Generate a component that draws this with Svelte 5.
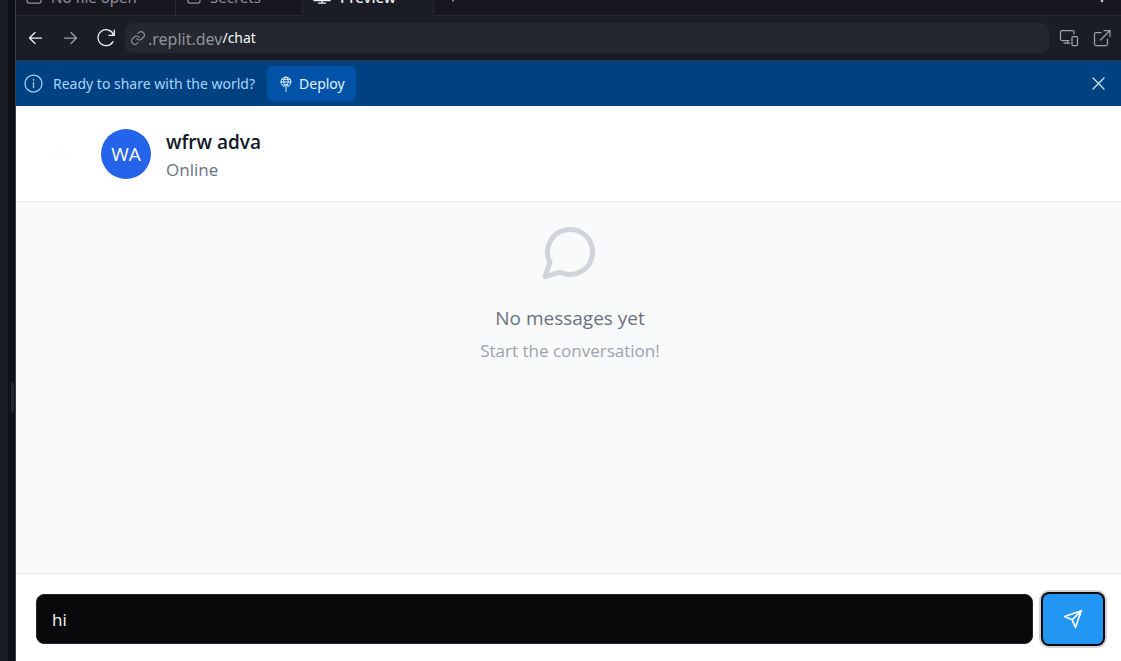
<script>
  let message = $state('hi');
  let address = $state('/chat');
  let bannerOpen = $state(true);
</script>

<div class="workspace">
  <div class="rail"></div>
  <div class="gutter"><span class="handle"></span></div>

  <div class="pane">
    <nav class="tabs">
      <button class="tab file">
        <svg width="16" height="14" viewBox="0 0 16 14"><rect x="1" y="1" width="14" height="12" rx="2" /></svg>
        No file open
      </button>
      <button class="tab secrets">
        <svg width="14" height="14" viewBox="0 0 14 14"><rect x="1" y="1" width="12" height="12" rx="2" /></svg>
        Secrets
      </button>
      <button class="tab preview">
        <svg width="18" height="14" viewBox="0 0 18 14"><path d="M1 1h16v9.500H1zM9 10.500V13M5.500 13h7M1 9.800h16" /></svg>
        Preview
      </button>
      <button class="tab add" aria-label="New tab">
        <svg width="12" height="12" viewBox="0 0 12 12"><path d="M6 0v10M0 5h12" /></svg>
      </button>
      <button class="tab more" aria-label="More options">
        <svg width="4" height="14" viewBox="0 0 4 14"><g fill="currentColor" stroke="none"><circle cx="2" cy="1" r="1.300" /><circle cx="2" cy="6" r="1.300" /><circle cx="2" cy="11" r="1.300" /></g></svg>
      </button>
    </nav>

    <div class="toolbar">
      <button class="tool bright" aria-label="Back">
        <svg width="15" height="14" viewBox="0 0 15 14"><path d="M13.500 7H1.500M7 1.500L1.500 7l5.500 5.500" /></svg>
      </button>
      <button class="tool" aria-label="Forward">
        <svg width="15" height="14" viewBox="0 0 15 14"><path d="M1.500 7h12M8 1.500L13.500 7 8 12.500" /></svg>
      </button>
      <button class="tool bright" aria-label="Reload">
        <svg width="20" height="18" viewBox="0 0 20 18"><path d="M17.600 6.200A8 8 0 1 0 17 12.600M18.300 1v5.400h-5.400" /></svg>
      </button>
      <div class="address">
        <svg width="16" height="16" viewBox="0 0 24 24"><path stroke-width="1.700" d="M10 13a5 5 0 0 0 7.500.5l3-3a5 5 0 0 0-7-7L11.800 5.200M14 11a5 5 0 0 0-7.500-.5l-3 3a5 5 0 0 0 7 7l1.700-1.700" /></svg>
        <label for="path">.replit.dev</label>
        <input id="path" type="text" bind:value={address} />
      </div>
      <button class="tool" aria-label="Device size">
        <svg width="20" height="18" viewBox="0 0 20 18"><path d="M10 11.500H3A1.500 1.500 0 0 1 1.500 10V3A1.500 1.500 0 0 1 3 1.500h10.500A1.500 1.500 0 0 1 15 3v2M8.500 11.500V14M5 14h6" /><rect x="13" y="7.500" width="5.500" height="9" rx="1" /></svg>
      </button>
      <button class="tool" aria-label="Open in new tab">
        <svg width="18" height="18" viewBox="0 0 18 18"><path d="M8 3.500H3A1.500 1.500 0 0 0 1.500 5v10A1.500 1.500 0 0 0 3 16.500h10a1.500 1.500 0 0 0 1.500-1.500v-5M11 1.500h6v6M17 1.500l-9.500 9.500" /></svg>
      </button>
    </div>

    {#if bannerOpen}
      <div class="banner">
        <svg width="19" height="19" viewBox="0 0 19 19"><circle cx="9.500" cy="9.500" r="8.500" /><path d="M9.500 8.500v5M9.500 5.300v1" /></svg>
        <span>Ready to share with the world?</span>
        <button class="deploy">
          <svg width="12" height="16" viewBox="0 0 12 16"><path stroke-width="1" d="M4 10.600a5 5 0 1 1 4 0M1 6h10M4.500 9C3 5 4 2 6 1c2 1 3 4 1.500 8M2 3.300h8M6 15.500V8.300M3.800 10.300L6 8.200l2.200 2.100" /></svg>
          Deploy
        </button>
        <button class="close" aria-label="Dismiss" onclick={() => (bannerOpen = false)}>
          <svg width="13" height="13" viewBox="0 0 13 13"><path d="M1 1l11 11M12 1L1 12" /></svg>
        </button>
      </div>
    {/if}

    <main class="chat">
      <header>
        <button class="leave" aria-label="Back to conversations">
          <svg width="20" height="20" viewBox="0 0 24 24"><path stroke-width="1.500" d="M19 12H5M12 19l-7-7 7-7" /></svg>
        </button>
        <div class="avatar">WA</div>
        <div class="person">
          <h1>wfrw adva</h1>
          <p>Online</p>
        </div>
      </header>

      <section class="empty">
        <svg width="60" height="60" viewBox="0 0 24 24"><path d="M7.900 20A9 9 0 1 0 4 16.100L2 22Z" /></svg>
        <h2>No messages yet</h2>
        <p>Start the conversation!</p>
      </section>

      <form onsubmit={(e) => e.preventDefault()}>
        <input type="text" aria-label="Message" bind:value={message} />
        <button class="send" aria-label="Send">
          <svg width="20" height="20" viewBox="0 0 24 24"><path d="M22 2L15 22l-4-9-9-4ZM22 2L11 13" /></svg>
        </button>
      </form>
    </main>
  </div>
</div>

<style>
  :global(body) { margin: 0; background: #0e0f17; }
  * { box-sizing: border-box; }
  button, input { font: inherit; color: inherit; border: 0; background: none; padding: 0; outline: 0; }
  svg { display: block; flex: none; fill: none; stroke: currentColor; stroke-width: 1.250; stroke-linecap: round; stroke-linejoin: round; }
  h1, h2, p { margin: 0; }

  .workspace { display: flex; height: 100vh; overflow: hidden; font: 14px/20px "Noto Sans", sans-serif; }
  .rail { width: 8px; background: #1b1d26; }
  .gutter { width: 8px; display: flex; align-items: center; justify-content: flex-end; padding: 132px 1px 0 0; background: #0e0f17; border-right: 1px solid #3c3d44; }
  .handle { width: 3px; height: 30px; background: #232430; border-radius: 2px; }
  .pane { flex: 1; min-width: 0; display: flex; flex-direction: column; background: #1b1d26; }

  .tabs { height: 16px; flex: none; display: flex; align-items: flex-end; overflow: hidden; background: #171720; color: #8f919b; }
  .tab { height: 37px; display: flex; align-items: center; gap: 9px; padding: 0 10px; border-right: 1px solid #282a34; border-bottom: 1px solid #282a34; font-size: 15px; white-space: nowrap; }
  .file { width: 160px; }
  .secrets { width: 127px; padding-left: 11px; }
  .preview { width: 131px; background: #1b1d26; color: #f0f1f4; border-bottom-color: #1b1d26; font-weight: 500; }
  .add { flex: 1; padding-left: 13px; color: #c2c8cc; border-right: 0; }
  .more { padding: 0 17px 0 0; border-right: 0; color: #c2c8cc; }

  .toolbar { height: 44px; flex: none; display: flex; align-items: center; gap: 17px; padding: 0 10px; }
  .tool { color: #9da2a6; min-width: 18px; display: flex; justify-content: center; }
  .bright { color: #f0f1f4; }
  .tool:last-child { margin-left: -3px; }
  .toolbar > .address { flex: 1; min-width: 0; height: 30px; margin: 0 -7px 0 -8px; padding: 0 5px; display: flex; align-items: center; background: #24272f; border-radius: 8px; color: #8f949b; }
  .address label { padding: 2px 0 0 2px; font-size: 16px; }
  .address input { flex: 1; min-width: 0; color: #f5f9fc; }

  .banner { height: 46px; flex: none; display: flex; align-items: center; padding: 0 16px 0 8px; background: #004182; border-top: 1px solid #2b3245; color: #a8d4ff; }
  .banner span { padding: 0 12px 0 10px; }
  .deploy { height: 35px; display: flex; align-items: center; gap: 7px; padding: 0 11px 0 13px; background: #0053a6; border-radius: 6px; color: #e4f2ff; }
  .close { margin-left: auto; color: #d0e8ff; }

  .chat { flex: 1; min-height: 0; display: flex; flex-direction: column; background: #f9fafb; font: 17px/28px "Open Sans", sans-serif; }
  header { height: 96px; flex: none; display: flex; align-items: center; padding: 0 20px; background: #fff; border-bottom: 1px solid #e5e7eb; }
  .leave { width: 50px; height: 50px; display: flex; align-items: center; justify-content: center; color: #f8f9fa; }
  .avatar { width: 50px; height: 50px; margin: 0 15px; display: flex; align-items: center; justify-content: center; border-radius: 50%; background: #2563eb; color: #fff; font-size: 19px; }
  .person { padding-top: 4px; }
  h1 { font-size: 19px; line-height: 28px; font-weight: 600; color: #111827; }
  .person p { color: #6b7280; }
  .empty { flex: 1; min-height: 0; display: flex; flex-direction: column; align-items: center; padding: 20px 0 0 3px; color: #9ca3af; }
  .empty svg { color: #d1d5db; stroke-width: 2; }
  h2 { margin: 22px 0 5px; font-size: 19px; line-height: 28px; font-weight: 400; color: #6b7280; }
  form { flex: none; display: flex; align-items: center; gap: 10px; padding: 20px 18px 17px 20px; background: #fff; border-top: 1px solid #e5e7eb; }
  form input { flex: 1; min-width: 0; height: 50px; padding: 0 15px; background: #09090b; border: 1px solid #27272a; border-radius: 8px; color: #fafafa; }
  .send { width: 60px; height: 50px; display: flex; align-items: center; justify-content: center; background: #2196f3; color: #fff; border-radius: 6px; box-shadow: 0 0 0 2px #09090b, 0 0 0 4px #d4d4d8; }
  .send svg { stroke-width: 2; }
</style>
